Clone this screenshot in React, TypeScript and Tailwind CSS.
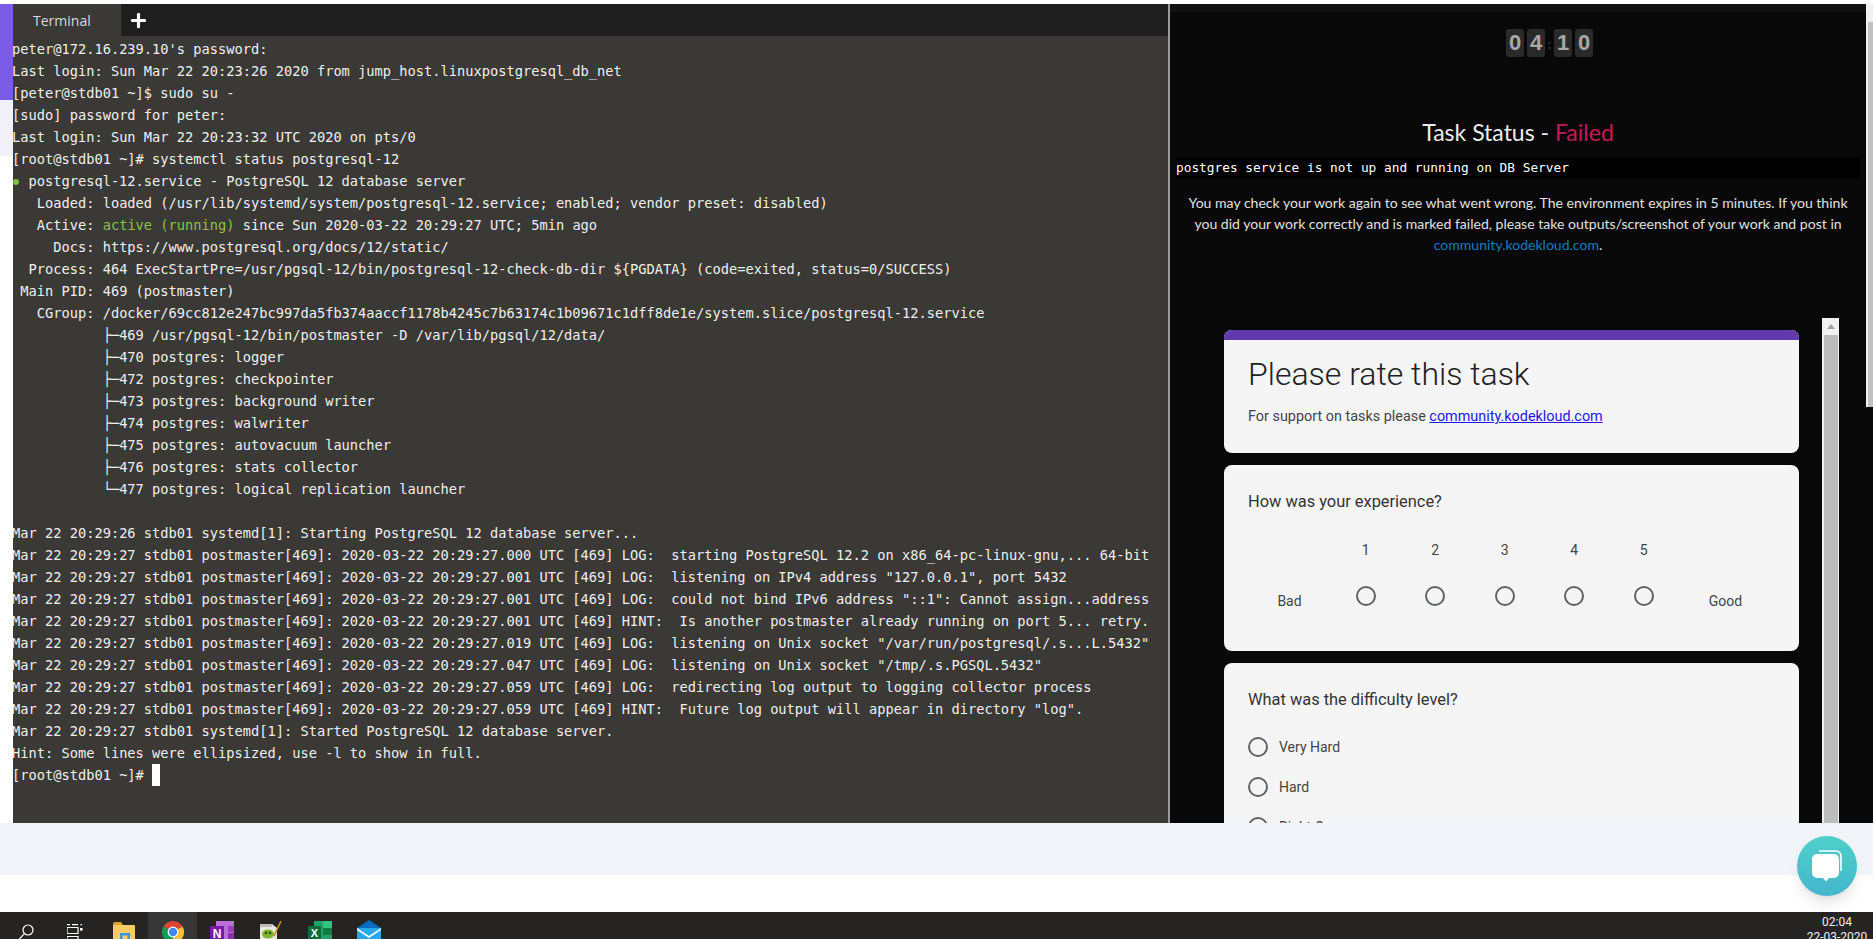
import React from 'react';
import { Plus } from 'lucide-react';

const mono = 'font-["DejaVu_Sans_Mono","Liberation_Mono",monospace]';

const topLines = [
  "peter@172.16.239.10's password:",
  'Last login: Sun Mar 22 20:23:26 2020 from jump_host.linuxpostgresql_db_net',
  '[peter@stdb01 ~]$ sudo su -',
  '[sudo] password for peter:',
  'Last login: Sun Mar 22 20:23:32 UTC 2020 on pts/0',
  '[root@stdb01 ~]# systemctl status postgresql-12',
];

const statusLines = [
  '   Loaded: loaded (/usr/lib/systemd/system/postgresql-12.service; enabled; vendor preset: disabled)',
];

const detailLines = [
  '     Docs: https://www.postgresql.org/docs/12/static/',
  '  Process: 464 ExecStartPre=/usr/pgsql-12/bin/postgresql-12-check-db-dir ${PGDATA} (code=exited, status=0/SUCCESS)',
  ' Main PID: 469 (postmaster)',
  '   CGroup: /docker/69cc812e247bc997da5fb374aaccf1178b4245c7b63174c1b09671c1dff8de1e/system.slice/postgresql-12.service',
  '           ├─469 /usr/pgsql-12/bin/postmaster -D /var/lib/pgsql/12/data/',
  '           ├─470 postgres: logger',
  '           ├─472 postgres: checkpointer',
  '           ├─473 postgres: background writer',
  '           ├─474 postgres: walwriter',
  '           ├─475 postgres: autovacuum launcher',
  '           ├─476 postgres: stats collector',
  '           └─477 postgres: logical replication launcher',
  ' ',
  'Mar 22 20:29:26 stdb01 systemd[1]: Starting PostgreSQL 12 database server...',
  'Mar 22 20:29:27 stdb01 postmaster[469]: 2020-03-22 20:29:27.000 UTC [469] LOG:  starting PostgreSQL 12.2 on x86_64-pc-linux-gnu,... 64-bit',
  'Mar 22 20:29:27 stdb01 postmaster[469]: 2020-03-22 20:29:27.001 UTC [469] LOG:  listening on IPv4 address "127.0.0.1", port 5432',
  'Mar 22 20:29:27 stdb01 postmaster[469]: 2020-03-22 20:29:27.001 UTC [469] LOG:  could not bind IPv6 address "::1": Cannot assign...address',
  'Mar 22 20:29:27 stdb01 postmaster[469]: 2020-03-22 20:29:27.001 UTC [469] HINT:  Is another postmaster already running on port 5... retry.',
  'Mar 22 20:29:27 stdb01 postmaster[469]: 2020-03-22 20:29:27.019 UTC [469] LOG:  listening on Unix socket "/var/run/postgresql/.s...L.5432"',
  'Mar 22 20:29:27 stdb01 postmaster[469]: 2020-03-22 20:29:27.047 UTC [469] LOG:  listening on Unix socket "/tmp/.s.PGSQL.5432"',
  'Mar 22 20:29:27 stdb01 postmaster[469]: 2020-03-22 20:29:27.059 UTC [469] LOG:  redirecting log output to logging collector process',
  'Mar 22 20:29:27 stdb01 postmaster[469]: 2020-03-22 20:29:27.059 UTC [469] HINT:  Future log output will appear in directory "log".',
  'Mar 22 20:29:27 stdb01 systemd[1]: Started PostgreSQL 12 database server.',
  'Hint: Some lines were ellipsized, use -l to show in full.',
];

const Digit = ({ value }: { value: string }) => (
  <div className='w-[18px] h-[28px] pb-[2px] rounded-[3px] bg-[#2a2a2a] flex items-center justify-center text-[#a8a8a8] text-[22px] font-bold font-["Liberation_Sans",sans-serif]'>
    {value}
  </div>
);

const Radio = () => <div className="w-5 h-5 rounded-full border-2 border-[#5f6368] shrink-0" />;

const Terminal = () => (
  <div className="w-[1155px] h-full bg-[#3a3935] flex flex-col overflow-hidden">
    <div className="h-8 bg-[#1e1e1e] flex items-center shrink-0">
      <div className='w-[108px] h-full bg-[#3a3935] pl-5 flex items-center text-[14px] text-[#d8d8d8] font-["Open_Sans",sans-serif]'>
        Terminal
      </div>
      <Plus size={21} strokeWidth={3.6} className="ml-[7px] text-white" />
    </div>
    <div className={`-ml-px pt-[2px] text-[13.69px] leading-[22px] text-[#efefef] whitespace-pre ${mono}`}>
      {topLines.map((l, i) => (
        <div key={i} className="h-[22px]">{l}</div>
      ))}
      <div className="h-[22px]">
        <span className="inline-block w-[8.24px]">
          <span className="inline-block w-[6px] h-[6px] ml-px mb-px rounded-full bg-[#7fc241]" />
        </span>
        {' postgresql-12.service - PostgreSQL 12 database server'}
      </div>
      {statusLines.map((l, i) => (
        <div key={i} className="h-[22px]">{l}</div>
      ))}
      <div className="h-[22px]">
        {'   Active: '}
        <span className="text-[#8ac440]">active (running)</span> since Sun 2020-03-22 20:29:27 UTC; 5min ago
      </div>
      {detailLines.map((l, i) => (
        <div key={i} className="h-[22px]">{l}</div>
      ))}
      <div className="h-[22px] flex items-center">
        <span>{'[root@stdb01 ~]# '}</span>
        <span className="w-2 h-[22px] bg-white" />
      </div>
    </div>
  </div>
);

const RatingForm = () => (
  <div className='mt-[63px] pl-[54px] flex flex-1 min-h-0 overflow-hidden font-["Roboto",sans-serif]'>
    <div className="w-[575px] pt-3 flex flex-col gap-3 shrink-0">
      <div className="h-[123px] rounded-lg bg-[#f5f5f5] overflow-hidden shrink-0">
        <div className="h-[10px] bg-[#6239ad]" />
        <div className="pl-6 mt-[14px] text-[32px] leading-10 font-light text-[#202124]">Please rate this task</div>
        <div className="pl-6 mt-[13px] text-[14.4px] leading-5 text-[#444]">
          For support on tasks please <a className="text-[#2015e8] underline">community.kodekloud.com</a>
        </div>
      </div>
      <div className="h-[186px] rounded-lg bg-[#f5f5f5] pl-6 pt-[25px] shrink-0">
        <div className="text-[16.4px] leading-6 text-[#333]">How was your experience?</div>
        <div className="mt-[26px] grid grid-cols-[83px_repeat(5,69.5px)_94px] text-[14px] text-[#444] justify-items-center">
          <div />
          {['1', '2', '3', '4', '5'].map(n => (
            <div key={n} className="leading-5">{n}</div>
          ))}
          <div />
          <div className="mt-[31px] leading-5">Bad</div>
          {[1, 2, 3, 4, 5].map(n => (
            <div key={n} className="mt-[26px]"><Radio /></div>
          ))}
          <div className="mt-[31px] leading-5">Good</div>
        </div>
      </div>
      <div className="rounded-lg bg-[#f5f5f5] pl-6 pt-[25px] h-[240px] shrink-0">
        <div className="text-[16.4px] leading-6 text-[#333]">What was the difficulty level?</div>
        <div className="mt-[15px] flex flex-col text-[14px] text-[#444]">
          {['Very Hard', 'Hard', 'Right On'].map(o => (
            <div key={o} className="h-10 flex items-center gap-[11px]">
              <Radio />
              <span>{o}</span>
            </div>
          ))}
        </div>
      </div>
    </div>
    <div className="ml-[23px] w-[17px] bg-[#f1f1f1] shrink-0 flex flex-col items-center">
      <div className="h-[17px] flex items-center justify-center">
        <div className="w-0 h-0 border-x-4 border-x-transparent border-b-[5px] border-b-[#a3a3a3]" />
      </div>
      <div className="w-[14px] flex-1 bg-[#bcbcbc]" />
    </div>
  </div>
);

const TaskPanel = () => (
  <div className="flex-1 flex min-w-0 bg-[#080808]">
    <div className='w-[696px] flex flex-col font-["Lato",sans-serif]'>
      <div className="h-2 bg-[#111] shrink-0" />
      <div className="mt-[17px] ml-[336px] flex items-center shrink-0">
        <Digit value="0" />
        <div className="ml-[3px]"><Digit value="4" /></div>
        <div className="w-[9px] text-center text-[14px] text-[#333] font-bold">:</div>
        <Digit value="1" />
        <div className="ml-[3px]"><Digit value="0" /></div>
      </div>
      <div className="mt-[57px] h-9 leading-9 text-center text-[23px] text-[#ececec] shrink-0">
        Task Status - <span className="text-[#c8185a]">Failed</span>
      </div>
      <div className={`mx-[6px] mt-[7px] h-[21px] leading-[21px] bg-black text-white text-[12.8px] shrink-0 ${mono}`}>
        postgres service is not up and running on DB Server
      </div>
      <div className="mt-[14px] mx-[6px] text-center text-[14.05px] leading-[21px] text-[#e0e0e0] shrink-0">
        <div>You may check your work again to see what went wrong. The environment expires in 5 minutes. If you think</div>
        <div>you did your work correctly and is marked failed, please take outputs/screenshot of your work and post in</div>
        <div><a className="text-[#0f7fc0]">community.kodekloud.com</a>.</div>
      </div>
      <RatingForm />
    </div>
    <div className="w-[7px] h-[403px] bg-[#f1f1f1] pl-[2px] pt-[18px]">
      <div className="h-full bg-[#c1c1c1]" />
    </div>
  </div>
);

const taskIcons = [
  <svg key="search" width="16" height="16" viewBox="0 0 16 16" fill="none" stroke="#fff" strokeWidth="1.2" className="mt-[3px]">
    <circle cx="10" cy="6" r="5" />
    <path d="M6.3 9.7 1 15.5" />
  </svg>,
  <svg key="view" width="16" height="16" viewBox="0 0 16 16" fill="none" stroke="#fff" strokeWidth="1.2" className="mt-[3px]">
    <path d="M0 .6h3M5 .6h6M0 3.5h11v6H0zM0 12.5h11v3H0z" />
    <rect x="13" y="4" width="2.6" height="2.6" fill="#fff" stroke="none" />
    <path d="M13.5 .6H15" />
  </svg>,
  <svg key="explorer" width="22" height="22" viewBox="0 0 22 22">
    <path d="M0 3a2 2 0 0 1 2-2h6l2 3v2H0z" fill="#d9a037" />
    <rect x="0" y="4" width="22" height="18" rx="1" fill="#f6cb63" />
    <rect x="7" y="12" width="10" height="10" fill="#3a96dd" />
    <rect x="9.5" y="14.5" width="5" height="8" fill="#f6cb63" />
  </svg>,
  <svg key="chrome" width="22" height="22" viewBox="0 0 22 22">
    <path d="M11 11 1.47 5.5A11 11 0 0 1 20.53 5.5Z" fill="#db4437" />
    <path d="M11 11 1.47 5.5A11 11 0 0 0 11 22Z" fill="#0f9d58" />
    <path d="M11 11 20.53 5.5A11 11 0 0 1 11 22Z" fill="#fbc02d" />
    <circle cx="11" cy="11" r="5.4" fill="#fff" />
    <circle cx="11" cy="11" r="4.2" fill="#4285f4" />
  </svg>,
  <svg key="onenote" width="24" height="22" viewBox="0 0 24 22">
    <rect x="6" y="0" width="18" height="22" fill="#ba6fd8" />
    <rect x="18" y="5" width="6" height="6" fill="#9a3fc0" />
    <rect x="18" y="12" width="6" height="6" fill="#8a2fb0" />
    <rect x="0" y="5" width="14" height="14" fill="#7719aa" />
    <text x="7" y="16.5" textAnchor="middle" fontSize="12" fontWeight="700" fill="#fff" fontFamily="Liberation Sans">N</text>
  </svg>,
  <svg key="npp" width="22" height="22" viewBox="0 0 22 22">
    <path d="M0 3h12l5 4v15H0z" fill="#e8e8e0" />
    <path d="M0 3h12v3H0z" fill="#bdbdb5" />
    <ellipse cx="8" cy="13" rx="6" ry="4.5" fill="#7cb82f" />
    <circle cx="6" cy="12" r="1.4" fill="#3a5a10" />
    <circle cx="10" cy="12" r="1.4" fill="#3a5a10" />
    <path d="M21 0 14 15" stroke="#c98a1b" strokeWidth="1.6" />
  </svg>,
  <svg key="excel" width="24" height="22" viewBox="0 0 24 22">
    <rect x="6" y="0" width="18" height="22" fill="#21a366" />
    <rect x="15" y="0" width="9" height="7" fill="#33c481" />
    <rect x="15" y="7" width="9" height="7" fill="#107c41" />
    <rect x="0" y="5" width="13" height="14" fill="#0e6b3a" />
    <text x="6.5" y="16" textAnchor="middle" fontSize="11" fontWeight="700" fill="#fff" fontFamily="Liberation Sans">X</text>
  </svg>,
  <svg key="mail" width="24" height="22" viewBox="0 0 24 22" className="-mt-px">
    <path d="M12 0 24 8v14H0V8z" fill="#0a6cc0" />
    <path d="M0 8h24v14H0z" fill="#28a8ea" />
    <path d="M0 8l12 8 12-8v2l-12 8L0 10z" fill="#fff" />
  </svg>,
];

const Taskbar = () => (
  <div className="h-[27px] bg-[#252423] flex overflow-hidden shrink-0">
    <div className="flex pl-px">
      {taskIcons.map((icon, i) => (
        <div key={i} className={`w-[49px] h-[27px] flex justify-center pt-[9px] ${i === 3 ? 'bg-[#373737]' : ''}`}>
          {icon}
        </div>
      ))}
    </div>
    <div className='ml-auto mr-[6px] w-[60px] pt-[3px] flex flex-col items-center whitespace-nowrap text-[12px] leading-[15px] text-[#eee] font-["Roboto",sans-serif]'>
      <span>02:04</span>
      <span>22-03-2020</span>
    </div>
  </div>
);

const App: React.FC = () => {
  return (
    <div className="relative w-[1873px] h-[939px] overflow-hidden bg-white flex flex-col">
      <div className="h-1 bg-white shrink-0" />
      <div className="h-[819px] flex shrink-0 overflow-hidden">
        <div className="w-[13px] flex flex-col shrink-0">
          <div className="h-[96px] bg-[#7b5ce6]" />
          <div className="h-[56px] bg-[#f2f0fb]" />
        </div>
        <Terminal />
        <div className="w-[2px] bg-[#9a9a9a] shrink-0" />
        <TaskPanel />
      </div>
      <div className="h-[52px] bg-[#f1f5f9] shrink-0" />
      <div className="h-[37px] bg-white shrink-0" />
      <Taskbar />

      {/* chat bubble sits on top of the page */}
      <div className="absolute left-[1797px] top-[836px] w-[60px] h-[60px] rounded-full bg-gradient-to-b from-[#4fd0c9] to-[#44b6cd] shadow-lg flex items-center justify-center">
        <svg width="31" height="32" viewBox="0 0 31 32">
          <path d="M7 1h17a5 5 0 0 1 5 5v15" fill="none" stroke="#fff" strokeWidth="1.6" />
          <path d="M5 4h17a5 5 0 0 1 5 5v14a5 5 0 0 1-5 5h-5l-3 3.5L11 28H5a5 5 0 0 1-5-5V9a5 5 0 0 1 5-5z" fill="#fff" />
        </svg>
      </div>
    </div>
  );
};

export default App;
